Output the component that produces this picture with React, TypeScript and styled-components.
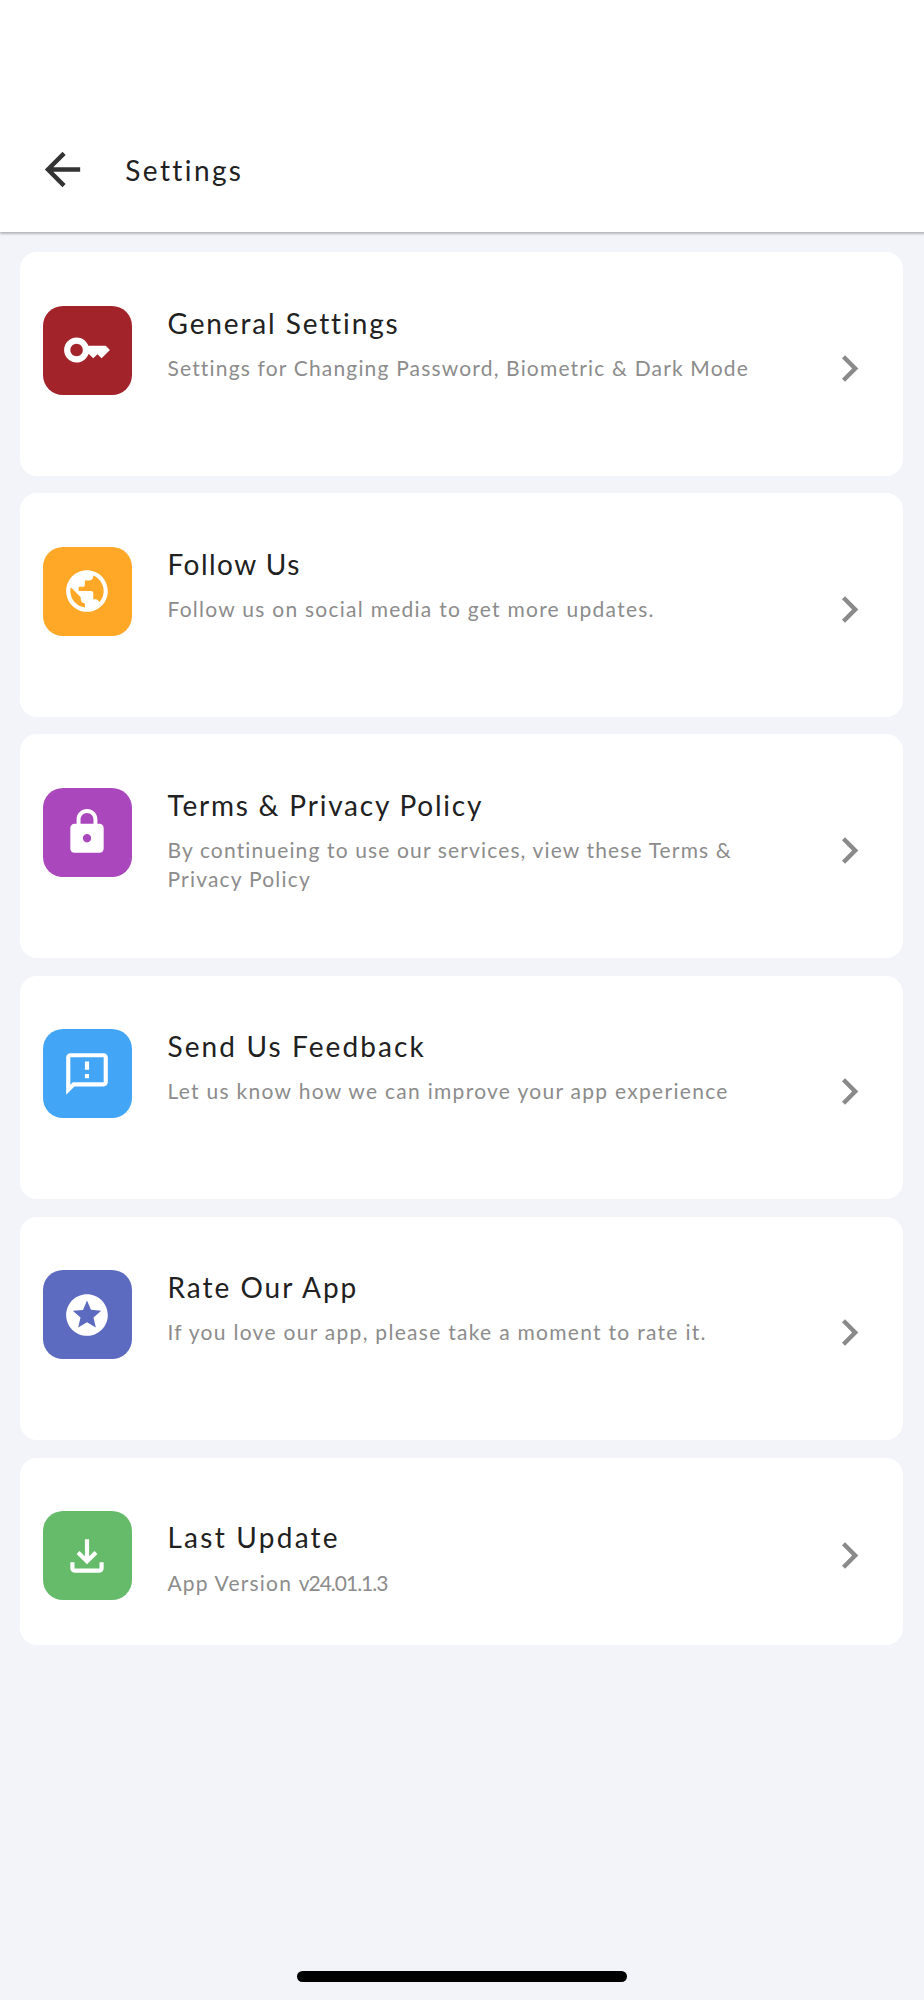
import React from "react";
import styled, { createGlobalStyle } from "styled-components";

const GlobalStyle = createGlobalStyle`
  * { box-sizing: border-box; }
  body { margin: 0; background: #f3f4f9; }
`;

const Screen = styled.div`
  display: flex;
  flex-direction: column;
  width: 924px;
  height: 2000px;
  background: #f3f4f9;
  font-family: Lato, "Open Sans", sans-serif;
  font-variant-ligatures: none;
`;

const Header = styled.header`
  display: flex;
  align-items: center;
  flex: none;
  height: 232px;
  padding: 107px 36.3px 0;
  gap: 36px;
  background: #fff;
  box-shadow: 0 1px 2px 0.5px rgba(40, 40, 50, 0.3);
`;

const HeaderTitle = styled.h1`
  margin: 0;
  font-size: 28px;
  font-weight: 400;
  line-height: 36px;
  letter-spacing: 2.4px;
  color: #212121;
`;

const Glyph = styled.svg<{ $size: number }>`
  display: block;
  flex: none;
  width: ${(p) => p.$size}px;
  height: ${(p) => p.$size}px;
  fill: currentColor;
`;

const BackButton = styled.button`
  padding: 0;
  border: 0;
  background: none;
  color: #333;
`;

const List = styled.main`
  display: flex;
  flex-direction: column;
  flex: 1;
  gap: 17.8px;
  padding: 20.4px 20.8px 0 20.3px;
`;

const Card = styled.section<{ $compact?: boolean }>`
  display: flex;
  align-items: flex-start;
  gap: 35.7px;
  height: ${(p) => (p.$compact ? 187.3 : 223.26)}px;
  padding: 53.4px 27.3px 44.4px 22.3px;
  border-radius: 17px;
  background: #fff;
`;

const Tile = styled.div<{ $color: string }>`
  display: flex;
  align-items: center;
  justify-content: center;
  flex: none;
  width: 89.2px;
  height: 89.2px;
  border-radius: 20px;
  background: ${(p) => p.$color};
  color: #fff;
`;

const Copy = styled.div<{ $compact?: boolean }>`
  flex: 1;
  min-width: 0;
  margin-top: ${(p) => (p.$compact ? 8.3 : -1.1)}px;
`;

const Title = styled.h2<{ $spacing: number }>`
  margin: 0 0 12.3px;
  font-size: 28px;
  font-weight: 400;
  line-height: 36px;
  letter-spacing: ${(p) => p.$spacing}px;
  color: #212121;
`;

const Line = styled.p<{ $spacing: number }>`
  margin: 0;
  font-size: 21px;
  line-height: 29px;
  letter-spacing: ${(p) => p.$spacing}px;
  white-space: nowrap;
  color: #8c8c8c;
`;

const VersionNumber = styled.span`
  letter-spacing: -1px;
`;

const Chevron = styled.div`
  align-self: center;
  color: #8a8a8a;
`;

const HomeIndicator = styled.div`
  align-self: center;
  flex: none;
  width: 330px;
  height: 11px;
  margin-bottom: 18px;
  border-radius: 6px;
  background: #000;
`;

function Icon({ d, size = 50 }: { d: string; size?: number }) {
  return (
    <Glyph $size={size} viewBox="0 0 24 24" aria-hidden="true">
      <path d={d} />
    </Glyph>
  );
}

const paths = {
  back: "M20 11H7.83l5.59-5.59L12 4l-8 8 8 8 1.41-1.41L7.83 13H20v-2z",
  chevron: "M10 6 8.59 7.41 13.17 12l-4.58 4.59L10 18l6-6z",
  key: "M21 10h-8.35C11.83 7.67 9.61 6 7 6c-3.31 0-6 2.69-6 6s2.69 6 6 6c2.61 0 4.83-1.67 5.65-4H13l2 2 2-2 2 2 4-4.04L21 10zM7 15c-1.65 0-3-1.35-3-3s1.35-3 3-3 3 1.35 3 3-1.35 3-3 3z",
  globe:
    "M12 2C6.48 2 2 6.48 2 12s4.48 10 10 10 10-4.48 10-10S17.52 2 12 2zm-1 17.93c-3.95-.49-7-3.85-7-7.93 0-.62.08-1.21.21-1.79L9 15v1c0 1.1.9 2 2 2v1.93zm6.9-2.54c-.26-.81-1-1.39-1.9-1.39h-1v-3c0-.55-.45-1-1-1H8v-2h2c.55 0 1-.45 1-1V7h2c1.1 0 2-.9 2-2v-.41c2.93 1.19 5 4.06 5 7.41 0 2.08-.8 3.97-2.1 5.39z",
  lock: "M18 8h-1V6c0-2.76-2.24-5-5-5S7 3.24 7 6v2H6c-1.1 0-2 .9-2 2v10c0 1.1.9 2 2 2h12c1.1 0 2-.9 2-2V10c0-1.1-.9-2-2-2zm-6 9c-1.1 0-2-.9-2-2s.9-2 2-2 2 .9 2 2-.9 2-2 2zm3.1-9H8.9V6c0-1.71 1.39-3.1 3.1-3.1s3.1 1.39 3.1 3.1v2z",
  feedback:
    "M20 2H4c-1.1 0-1.99.9-1.99 2L2 22l4-4h14c1.1 0 2-.9 2-2V4c0-1.1-.9-2-2-2zm0 14H5.17l-.59.59-.58.58V4h16v12zm-9-4h2v2h-2zm0-6h2v4h-2z",
  star: "M11.99 2C6.47 2 2 6.48 2 12s4.47 10 9.99 10C17.52 22 22 17.52 22 12S17.52 2 11.99 2zm4.24 16L12 15.45 7.77 18l1.12-4.81-3.73-3.23 4.92-.42L12 5l1.92 4.53 4.92.42-3.73 3.23L16.23 18z",
  download:
    "M18 15v3H6v-3H4v3c0 1.1.9 2 2 2h12c1.1 0 2-.9 2-2v-3h-2zm-1-4-1.41-1.41L13 12.17V4h-2v8.17L8.41 9.59 7 11l5 5 5-5z",
};

interface Item {
  title: string;
  titleSpacing: number;
  lines: { text: string; spacing: number; version?: string }[];
  color: string;
  icon: string;
  compact?: boolean;
}

const items: Item[] = [
  {
    title: "General Settings",
    titleSpacing: 1.88,
    lines: [{ text: "Settings for Changing Password, Biometric & Dark Mode", spacing: 1.17 }],
    color: "#a3232b",
    icon: paths.key,
  },
  {
    title: "Follow Us",
    titleSpacing: 1.48,
    lines: [{ text: "Follow us on social media to get more updates.", spacing: 1.26 }],
    color: "#ffa827",
    icon: paths.globe,
  },
  {
    title: "Terms & Privacy Policy",
    titleSpacing: 1.79,
    lines: [
      { text: "By continueing to use our services, view these Terms &", spacing: 1.14 },
      { text: "Privacy Policy", spacing: 1.2 },
    ],
    color: "#ab47bc",
    icon: paths.lock,
  },
  {
    title: "Send Us Feedback",
    titleSpacing: 2.11,
    lines: [{ text: "Let us know how we can improve your app experience", spacing: 1.29 }],
    color: "#42a5f5",
    icon: paths.feedback,
  },
  {
    title: "Rate Our App",
    titleSpacing: 1.99,
    lines: [{ text: "If you love our app, please take a moment to rate it.", spacing: 1.29 }],
    color: "#5c6bc0",
    icon: paths.star,
  },
  {
    title: "Last Update",
    titleSpacing: 2.25,
    lines: [{ text: "App Version ", spacing: 1.2, version: "v24.01.1.3" }],
    color: "#66bb6a",
    icon: paths.download,
    compact: true,
  },
];

export default function App() {
  return (
    <Screen>
      <GlobalStyle />
      <Header>
        <BackButton aria-label="Back">
          <Icon d={paths.back} size={53} />
        </BackButton>
        <HeaderTitle>Settings</HeaderTitle>
      </Header>
      <List>
        {items.map((item) => (
          <Card key={item.title} $compact={item.compact}>
            <Tile $color={item.color}>
              <Icon d={item.icon} />
            </Tile>
            <Copy $compact={item.compact}>
              <Title $spacing={item.titleSpacing}>{item.title}</Title>
              {item.lines.map((line) => (
                <Line key={line.text} $spacing={line.spacing}>
                  {line.text}
                  {line.version && <VersionNumber>{line.version}</VersionNumber>}
                </Line>
              ))}
            </Copy>
            <Chevron>
              <Icon d={paths.chevron} size={53} />
            </Chevron>
          </Card>
        ))}
      </List>
      <HomeIndicator />
    </Screen>
  );
}
